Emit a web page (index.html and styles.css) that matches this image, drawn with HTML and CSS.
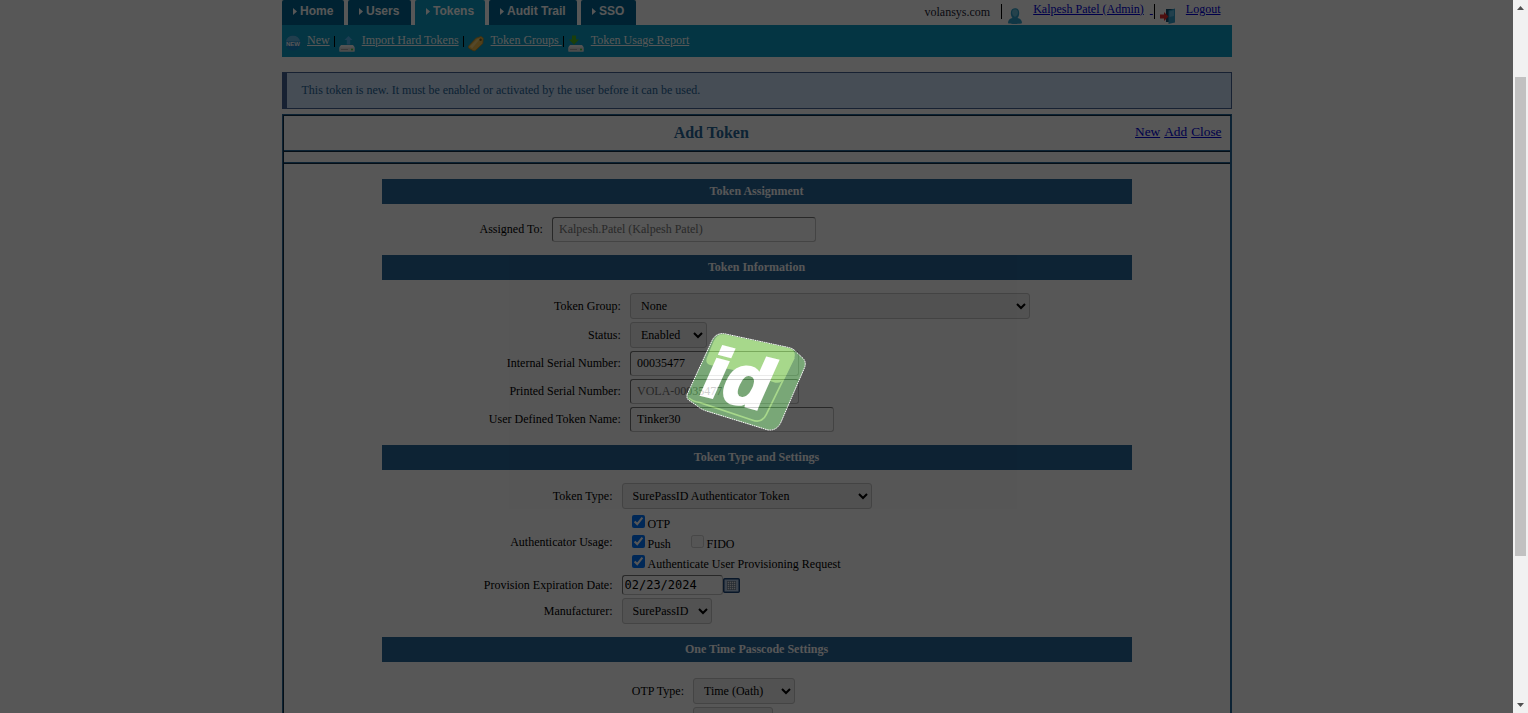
FILE: index.html
```html
<!DOCTYPE html>
<html lang="en">
<head>
<meta charset="utf-8">
<title>Add Token</title>
<link rel="stylesheet" href="styles.css">
</head>
<body>
<div class="window">
  <div class="page">
    <header class="top">
      <nav class="tabs">
        <a class="tab tab-home"><i class="arrow"></i>Home</a>
        <a class="tab tab-users"><i class="arrow"></i>Users</a>
        <a class="tab tab-tokens active"><i class="arrow"></i>Tokens</a>
        <a class="tab tab-audit"><i class="arrow"></i>Audit Trail</a>
        <a class="tab tab-sso"><i class="arrow"></i>SSO</a>
      </nav>
      <div class="account">
        <span class="domain">volansys.com</span>
        <i class="bar"></i>
        <svg class="user-icon" width="16" height="16" viewBox="0 0 16 16"><path d="M1 15c0-3 2-4.500 4.500-5C4 8.500 3.500 6 4 3.500 4.500 1 6 .3 8 .3s3.500.7 4 3.200c.5 2.500 0 5-1.500 6.500 2.500.5 4.500 2 4.500 5-.4 1.300-13.600 1.300-14 0z" fill="#2e9fc9"/><path d="M5 4c.5-2 1.500-2.700 3-2.700S10.500 2 11 4c0 2-1 4-3 5-2-1-3-3-3-5z" fill="#6cc1de"/></svg>
        <a class="link account-name">Kalpesh Patel (Admin)</a><a class="link tail">&nbsp;</a>
        <i class="bar"></i>
        <svg class="exit-icon" width="16" height="16" viewBox="0 0 16 16"><path d="M6 1h8v13H6z" fill="#144e70"/><path d="M8.500 2.500 15 .5v14l-6.500 1.500z" fill="#2f9cc7"/><path d="M9.500 3.500 14 2v6L9.500 9z" fill="#64bce0"/><path d="M0 6.500h4V4l4.500 4.500L4 13v-2.500H0z" fill="#e03030"/></svg>
        <a class="link">Logout</a>
      </div>
    </header>

    <nav class="subnav">
      <svg class="sub-icon" width="16" height="16" viewBox="0 0 16 16"><circle cx="8" cy="8" r="7.500" fill="#1a86cc"/><path d="M.8 6.500a7.400 7.400 0 0 1 14.400 0z" fill="#62b6e0"/><text x="8" y="10.500" text-anchor="middle" class="new-badge">NEW</text></svg>
      <a class="sub-link link-new">New</a><i class="sep"></i>
      <svg class="sub-icon disk" width="18" height="18" viewBox="0 0 18 18"><path d="M10.500 1l4 4h-2.300v4.500H8.800V5H6.500z" fill="#52b4ee"/><path d="M3 10h12l1.500 2v4.500h-15V12z" fill="#f4f4f4"/><path d="M1.500 12.500h15v4h-15z" fill="#dcdcdc"/><path d="M3 14.500h7" stroke="#aaa"/><circle cx="14" cy="14.500" r="1" fill="#3c3"/></svg>
      <a class="sub-link link-import">Import Hard Tokens</a><i class="sep"></i>
      <svg class="sub-icon tag" width="16" height="16" viewBox="0 0 16 16"><path d="M.7 10 8 2.200l5-1.700 2.200 1.500-.4 5.500-7.500 7q-1.200.8-2.300 0L.9 12.200q-.7-1-.2-2.200z" fill="#eebc4c" stroke="#c08a24" stroke-width=".8"/><path d="M2 10.500 9 3.300l3.700-1.300-8.500 10.300z" fill="#f8d47c"/><circle cx="12.600" cy="3.700" r="1.200" fill="#805c16"/></svg>
      <a class="sub-link link-groups">Token Groups&nbsp;</a><i class="sep"></i>
      <svg class="sub-icon disk" width="18" height="18" viewBox="0 0 18 18"><path d="M3 10h12l1.500 2v4.500h-15V12z" fill="#f4f4f4"/><path d="M5 .5h4v4h3L7 9.700 2 4.500h3z" fill="#4fb81e"/><path d="M1.500 12.500h15v4h-15z" fill="#dcdcdc"/><path d="M3 14.500h7" stroke="#aaa"/><circle cx="14" cy="14.500" r="1" fill="#3c3"/></svg>
      <a class="sub-link link-report">Token Usage Report</a>
    </nav>

    <p class="notice">This token is new. It must be enabled or activated by the user before it can be used.</p>

    <main class="panel">
      <div class="panel-head">
        <h1>Add Token</h1>
        <div class="actions"><a class="link">New</a><a class="link">Add</a><a class="link">Close</a></div>
      </div>
      <div class="strip"></div>
      <form class="form">
        <h2>Token Assignment</h2>
        <section class="rows assign">
          <div class="row"><label>Assigned To:</label><input class="field w264" value="Kalpesh.Patel (Kalpesh Patel)" disabled></div>
        </section>

        <h2>Token Information</h2>
        <section class="rows info">
          <div class="row"><label>Token Group:</label><select class="w400"><option>None</option></select></div>
          <div class="row"><label>Status:</label><select class="w77"><option>Enabled</option></select></div>
          <div class="row"><label>Internal Serial Number:</label><input class="field w169" value="00035477"></div>
          <div class="row"><label>Printed Serial Number:</label><input class="field w169" value="VOLA-00035477" disabled></div>
          <div class="row"><label>User Defined Token Name:</label><input class="field w204" value="Tinker30"></div>
        </section>

        <h2>Token Type and Settings</h2>
        <section class="rows type">
          <div class="row"><label>Token Type:</label><select class="w250"><option>SurePassID Authenticator Token</option></select></div>
          <div class="row"><label>Authenticator Usage:</label>
            <div class="checks">
              <div class="check-line"><input type="checkbox" checked><span>OTP</span></div>
              <div class="check-line"><input type="checkbox" checked><span class="push">Push</span><input type="checkbox" disabled><span>FIDO</span></div>
              <div class="check-line"><input type="checkbox" checked><span>Authenticate User Provisioning Request</span></div>
            </div>
          </div>
          <div class="row date-row"><label>Provision Expiration Date:</label><input class="date" value="02/23/2024"><svg class="calendar" width="17" height="16" viewBox="0 0 17 16"><rect x=".75" y=".75" width="15.500" height="13.500" rx="1" fill="#b5c9e4" stroke="#1d4478" stroke-width="1.500"/><rect x="4" y="3" width="9" height="9" fill="#eee"/><path d="M4 3.500h9M4 5.500h9M4 7.500h9M4 9.500h9M4 11.500h9M4.500 3v9M6.500 3v9M8.500 3v9M10.500 3v9M12.500 3v9" stroke="#6b7c91" stroke-width=".7"/></svg></div>
          <div class="row"><label>Manufacturer:</label><select class="w90"><option>SurePassID</option></select></div>
        </section>

        <h2>One Time Passcode Settings</h2>
        <section class="rows otp">
          <div class="row"><label>OTP Type:</label><select class="w102"><option>Time (Oath)</option></select></div>
          <div class="row"><label></label><select class="w80"><option>6</option></select></div>
        </section>
      </form>
    </main>
  </div>

  <div class="overlay">
    <svg class="logo" width="180" height="125" viewBox="0 0 540 375">
      <path class="logo-body" d="M52 222 L126 62 Q137 39 162 41 L358 83 Q370 86 378 95 L400 116 Q409 126 404 142 L334 304 Q322 333 294 330 L106 272 Q90 266 78 255 L57 241 Q48 235 52 222Z"/>
      <path class="logo-face" d="M110 115 L131 64 Q141 41 162 43 L356 84 Q380 91 373 114 L343 175 Q335 191 316 188 Q240 161 180 148 Q145 142 118 134 Q106 130 110 115Z"/>
      <path class="logo-edge" d="M57 234 Q68 244 90 248 L246 300 Q275 312 289 283 L372 113"/>
      <text class="logo-text" transform="matrix(1.050 .27 -.43 .96 81 220)">id</text>
    </svg>
  </div>

  <div class="scrollbar">
    <svg width="15" height="16" viewBox="0 0 15 16"><path d="M4 10h7L7.500 6z" fill="#505050"/></svg>
    <div class="thumb"></div>
    <svg class="down" width="15" height="16" viewBox="0 0 15 16"><path d="M4 6h7l-3.500 4z" fill="#505050"/></svg>
  </div>
</div>
</body>
</html>
```
FILE: styles.css
```css
* { box-sizing: border-box; }
body { margin: 0; overflow: hidden; font: 12px "Liberation Serif", serif; color: #000; background: #fff; }
.window { display: flex; width: 1528px; height: 713px; position: relative; overflow: hidden; }
.page { width: 1513px; padding: 0 281.5px; overflow: hidden; }
.link { color: #00f; text-decoration: underline; }
.top .link, .actions .link { color: #0000d8; }

.top { display: flex; height: 25px; justify-content: space-between; }
.tabs { display: flex; gap: 4px; }
.tab { display: flex; height: 25px; padding: 3px 0 0 11.5px; background: #006592; color: #fff; font: bold 12px/16px "Liberation Sans", sans-serif; border-radius: 2px 2px 0 0; }
.tab.active { background: #0c9cc4; }
.arrow { width: 4px; height: 7px; margin: 5px 3px 0 0; background: #fff; clip-path: polygon(0 0, 100% 50%, 0 100%); }
.tab-home { width: 62px; }
.tab-users { width: 63px; }
.tab-tokens { width: 70px; }
.tab-audit { width: 88px; }
.tab-sso { width: 55px; }
.account { display: flex; align-items: flex-start; padding: 2px 11px 0 0; line-height: 14px; }
.domain { padding-top: 3px; color: #223; }
.bar { width: 1px; height: 15px; margin: 2px 0 0 11px; background: #000; }
.bar + svg { margin: 6px 0 0 5px; }
.user-icon + a { margin-left: 10px; }
.exit-icon + a { margin-left: 10px; }
.tail { margin-left: 6px; }
.tail + .bar { margin-left: 1px; }

.subnav { display: flex; height: 32px; padding: 8px 0 0 3.5px; background: #0c9cc4; line-height: 14px; }
.sub-link { color: #fff; text-decoration: underline; white-space: nowrap; }
.sub-icon { margin-top: 2px; }
.sub-icon.disk { margin-left: 3px; }
.sub-icon.tag { margin: 3px 0 0 4px; }
.sep { width: 1px; height: 11px; margin: 3px 0 0 4px; background: #000; }
.new-badge { font: bold 6px "Liberation Sans", sans-serif; fill: #fff; }
.link-new { margin-left: 6px; }
.link-import { margin-left: 6px; }
.link-groups { margin-left: 7px; }
.link-groups + .sep { margin-left: 1px; }
.link-report { margin-left: 6px; }

.notice { height: 37px; margin: 15px 0 5px; padding: 0 0 0 15px; border: 1px solid #446093; border-left-width: 5px; background: #cde0f8; color: #276699; line-height: 35px; }

.panel { height: 640px; border: 2px ridge #276699; border-right: 2px solid #276699; }
.panel-head { display: flex; height: 36px; align-items: center; border-bottom: 2px ridge #276699; padding: 0 8px 0 4px; }
.panel-head h1 { flex: 1; margin: 0; font-size: 16px; color: #276699; text-align: center; }
.actions { display: flex; gap: 4px; padding-bottom: 2px; font-size: 13.330px; }
.strip { height: 12px; border-bottom: 2px ridge #276699; }
.form { padding: 15px 98px 0; }
.form h2 { height: 25px; margin: 0; background: #276699; color: #fff; font-size: 12px; line-height: 24px; text-align: center; }
.rows { display: flex; flex-direction: column; gap: 3px; padding: 13px 0; }
.row { display: flex; align-items: center; }
.row label { flex: none; margin-right: 9px; text-align: right; }
.assign label { width: 161.25px; }
.info label { width: 239.25px; }
.type label { width: 231px; }
.otp label { width: 302.5px; }
.otp { padding-top: 16px; }

.field, .date { border: 1px solid; border-color: #767676 #c6c6c6 #c6c6c6 #767676; border-radius: 3px; background: #fff; color: #000; }
.field { height: 25px; padding: 0 6.25px; font: 12px "Liberation Serif", serif; }
.field:disabled { color: #777; }
select { height: 26px; padding: 0 0 0 6px; border: 1px solid #c6c6c6; border-radius: 3px; background-color: #efefef; color: #000; font: 12px "Liberation Serif", serif; }
.info select { padding-left: 6.25px; }
.w77 { width: 77px; }
.w80 { width: 80px; }
.w90 { width: 90px; }
.w102 { width: 102px; }
.w169 { width: 169px; }
.w204 { width: 204px; }
.w250 { width: 250px; }
.w264 { width: 264px; }
.w400 { width: 400px; }
.type { gap: 3px; }
.checks { height: 60px; padding-left: 10px; }
.check-line { display: flex; height: 20px; line-height: 24px; }
.check-line input { width: 13px; height: 13px; margin: 3px 3px 0 0; }
.push { width: 43px; }
.date { width: 101px; height: 20px; padding: 1px 2px; font: 12px "DejaVu Sans Mono", monospace; }
.calendar { margin-top: 2px; }

.overlay { position: absolute; left: 0; top: 0; width: 1513px; height: 713px; background: #000; opacity: .66; }
.logo { position: absolute; left: 670px; top: 320px; }
.logo-body { fill: #357b32; stroke: #fff; stroke-width: 3; stroke-dasharray: 5 2; }
.logo-face { fill: #7bc450; }
.logo-edge { fill: none; stroke: #7bc450; stroke-width: 5; }
.logo-text { font: bold 205px "Liberation Sans", sans-serif; fill: #fff; stroke: #fff; stroke-width: 10; }

.scrollbar { display: flex; flex-direction: column; width: 15px; background: #f1f1f1; }
.thumb { width: 11px; height: 479px; margin: 61px 0 0 2px; background: #c1c1c1; }
.down { margin-top: auto; }
```
